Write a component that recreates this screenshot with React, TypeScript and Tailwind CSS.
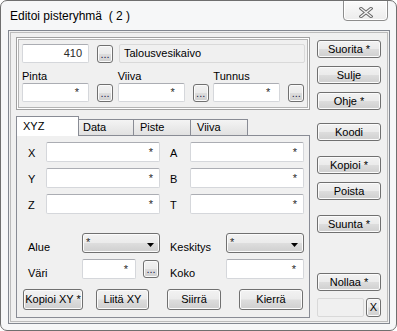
import React from "react";

const BTN =
  "flex items-center justify-center rounded-[3px] border border-[#707070] bg-[linear-gradient(to_bottom,#f2f2f2_0%,#ebebeb_48%,#dddddd_52%,#cfcfcf_100%)] shadow-[inset_0_0_0_1px_#fbfbfb] text-black leading-none whitespace-pre";

function Btn({ label, cls }: { label: string; cls: string }) {
  return <div className={`${BTN} ${cls}`}>{label}</div>;
}

function Dots({ cls = "" }: { cls?: string }) {
  return (
    <div
      className={`flex items-end justify-center rounded-[3px] border border-[#707070] bg-[linear-gradient(to_bottom,#f2f2f2_0%,#ebebeb_48%,#dddddd_52%,#cfcfcf_100%)] shadow-[inset_0_0_0_1px_#fbfbfb] w-[16px] h-[18px] pb-[2px] leading-[11px] text-[#1c1c48] shrink-0 ${cls}`}
    >
      ...
    </div>
  );
}

function Field({ cls, text = "*" }: { cls: string; text?: string }) {
  return (
    <div
      className={`flex items-center justify-end rounded-[2px] border border-[#d5d7db] border-t-[#abadb3] bg-white text-[#2a2a2a] shrink-0 ${cls}`}
    >
      {text}
    </div>
  );
}

function Select({ cls }: { cls: string }) {
  return (
    <div
      className={`flex items-start justify-between rounded-[3px] border border-[#707070] bg-[linear-gradient(to_bottom,#f2f2f2_0%,#ebebeb_48%,#dddddd_52%,#cfcfcf_100%)] shadow-[inset_0_0_0_1px_#fbfbfb] pl-[3px] pr-[5px] shrink-0 ${cls}`}
    >
      <span className="mt-[3px] leading-[11px] text-[#2a2a2a]">*</span>
      <svg width="7" height="4" viewBox="0 0 7 4" className="mt-[9px]">
        <polygon points="0,0 7,0 3.5,4" fill="#000" />
      </svg>
    </div>
  );
}

function Label({ text, cls }: { text: string; cls: string }) {
  return <div className={`shrink-0 leading-[13px] ${cls}`}>{text}</div>;
}

export default function App() {
  return (
    <div className="w-[397px] h-[331px] bg-white font-['Liberation_Sans',Arial,sans-serif] text-[11px] text-black">
      <div className="w-[397px] h-[331px] rounded-[7px] border border-[#6f6f6f] bg-[#f6f7f8] flex flex-col overflow-hidden">
        {/* title bar */}
        <div className="h-[29px] flex items-start shrink-0">
          <div className="pl-[9px] pt-[7px] text-[12px] leading-[16px] whitespace-pre">
            Editoi pisteryhmä  ( 2 )
          </div>
          <div className="ml-auto mr-[8px] -mt-[1px] w-[45px] h-[21px] rounded-b-[4px] border border-[#8d8d8d] bg-[linear-gradient(to_bottom,#fbfbfb,#ececec)] shadow-[inset_0_0_0_1px_#ffffff] flex items-start justify-center">
            <svg width="14" height="11" viewBox="0 0 14 11" className="mt-[6px]">
              <path d="M2 1.5 L12 9.5 M12 1.5 L2 9.5" stroke="#6a6a6a" strokeWidth="3.4" strokeLinecap="square" fill="none" />
              <path d="M2 1.5 L12 9.5 M12 1.5 L2 9.5" stroke="#f4f4f4" strokeWidth="1.4" strokeLinecap="square" fill="none" />
            </svg>
          </div>
        </div>

        {/* client */}
        <div className="ml-[7px] w-[382px] h-[294px] border border-[#828790] bg-[#f0f0f0] shrink-0">
          <div className="m-[1px] h-[290px] border border-[#bcbcbc] flex">
            {/* left column */}
            <div className="ml-[5px] w-[294px] flex flex-col">
              {/* top box */}
              <div className="mt-[4px] h-[73px] border border-[#a0a0a0] shadow-[inset_0_0_0_1px_#ffffff,inset_0_0_0_2px_#b4b4b4] pl-[5px] pt-[6px] flex flex-col">
                <div className="flex items-start">
                  <Field cls="w-[67px] h-[19px] pr-[6px]" text="410" />
                  <Dots cls="ml-[8px] mt-[1px]" />
                  <div className="ml-[6px] w-[186px] h-[19px] rounded-[2px] border border-[#d9d9d9] bg-[#f0f0f0] pl-[4px] flex items-center">
                    Talousvesikaivo
                  </div>
                </div>
                <div className="mt-[6px] flex">
                  {["Pinta", "Viiva", "Tunnus"].map((l) => (
                    <div key={l} className="w-[96px] flex flex-col">
                      <div className="h-[14px] leading-[14px]">{l}</div>
                      <div className="flex items-start">
                        <Field cls="w-[67px] h-[19px] pr-[9px]" />
                        <Dots cls="ml-[8px] mt-[1px]" />
                      </div>
                    </div>
                  ))}
                </div>
              </div>

              {/* tabs */}
              <div className="mt-[6px] h-[19px] flex items-end">
                <div className="relative z-10 -mb-[1px] w-[63px] h-[20px] border border-b-0 border-[#898c95] bg-white pl-[6px] pt-[3px] leading-[13px]">
                  XYZ
                </div>
                {["Data", "Piste", "Viiva"].map((t, i) => (
                  <div
                    key={t}
                    className={`${i === 0 ? "-ml-[3px]" : "-ml-[1px]"} w-[58px] h-[16px] border border-b-0 border-[#898c95] bg-[linear-gradient(to_bottom,#f4f4f4,#e1e1e1)] pl-[6px] pt-[1px] leading-[13px]`}
                  >
                    {t}
                  </div>
                ))}
              </div>

              {/* tab panel */}
              <div className="h-[183px] border border-[#898c95] bg-[#f0f0f0] pl-[11px] pt-[6px] flex flex-col">
                {[
                  ["X", "A"],
                  ["Y", "B"],
                  ["Z", "T"],
                ].map(([l, r], i) => (
                  <div key={l} className={`${i > 0 ? "mt-[6px]" : ""} flex items-start h-[20px]`}>
                    <div className="w-[142px] flex items-start">
                      <Label text={l} cls="w-[18px] mt-[5px]" />
                      <Field cls="w-[114px] h-[20px] pr-[6px]" />
                    </div>
                    <Label text={r} cls="w-[20px] mt-[5px]" />
                    <Field cls="w-[114px] h-[20px] pr-[6px]" />
                  </div>
                ))}

                <div className="mt-[19px] flex items-start h-[20px]">
                  <div className="w-[142px] flex items-start">
                    <Label text="Alue" cls="w-[54px] mt-[8px]" />
                    <Select cls="w-[78px] h-[20px]" />
                  </div>
                  <Label text="Keskitys" cls="w-[56px] mt-[8px]" />
                  <Select cls="w-[78px] h-[20px]" />
                </div>

                <div className="mt-[6px] flex items-start h-[20px]">
                  <div className="w-[142px] flex items-start">
                    <Label text="Väri" cls="w-[54px] mt-[8px]" />
                    <Field cls="w-[54px] h-[20px] pr-[7px]" />
                    <Dots cls="ml-[7px] mt-[1px]" />
                  </div>
                  <Label text="Koko" cls="w-[56px] mt-[8px]" />
                  <Field cls="w-[78px] h-[20px] pr-[7px]" />
                </div>

                <div className="mt-[10px] -ml-[5px] flex">
                  <Btn label="Kopioi XY *" cls="w-[60px] h-[21px]" />
                  <Btn label="Liitä XY" cls="ml-[13px] w-[53px] h-[21px]" />
                  <Btn label="Siirrä" cls="ml-[18px] w-[54px] h-[21px]" />
                  <Btn label="Kierrä" cls="ml-[18px] w-[64px] h-[21px]" />
                </div>
              </div>
            </div>

            {/* right column */}
            <div className="ml-[7px] w-[64px] flex flex-col">
              <Btn label="Suorita *" cls="mt-[7px] h-[18px]" />
              <Btn label="Sulje" cls="mt-[8px] h-[18px]" />
              <Btn label="Ohje *" cls="mt-[8px] h-[18px]" />
              <Btn label="Koodi" cls="mt-[13px] h-[18px]" />
              <Btn label="Kopioi *" cls="mt-[15px] h-[18px]" />
              <Btn label="Poista" cls="mt-[8px] h-[18px]" />
              <Btn label="Suunta *" cls="mt-[15px] h-[18px]" />
              <Btn label="Nollaa *" cls="mt-[40px] h-[18px]" />
              <div className="mt-[7px] flex">
                <div className="w-[47px] h-[19px] rounded-[2px] border border-[#d9d9d9] bg-[#f0f0f0]" />
                <Btn label="X" cls="ml-[2px] w-[15px] h-[19px]" />
              </div>
            </div>
          </div>
        </div>
      </div>
    </div>
  );
}
